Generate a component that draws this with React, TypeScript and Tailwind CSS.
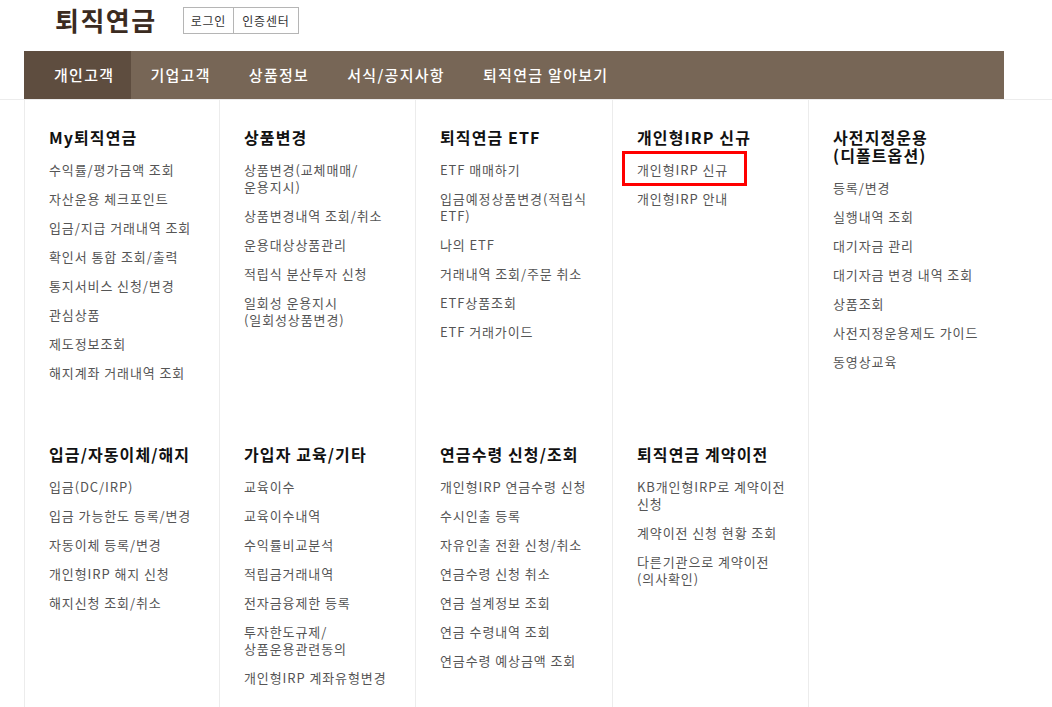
import React from "react";

type Col = { title: string[]; items: string[][]; highlight?: number };

const row1: Col[] = [
  {
    title: ["My퇴직연금"],
    items: [
      ["수익률/평가금액 조회"],
      ["자산운용 체크포인트"],
      ["입금/지급 거래내역 조회"],
      ["확인서 통합 조회/출력"],
      ["통지서비스 신청/변경"],
      ["관심상품"],
      ["제도정보조회"],
      ["해지계좌 거래내역 조회"],
    ],
  },
  {
    title: ["상품변경"],
    items: [
      ["상품변경(교체매매/", "운용지시)"],
      ["상품변경내역 조회/취소"],
      ["운용대상상품관리"],
      ["적립식 분산투자 신청"],
      ["일회성 운용지시", "(일회성상품변경)"],
    ],
  },
  {
    title: ["퇴직연금 ETF"],
    items: [
      ["ETF 매매하기"],
      ["입금예정상품변경(적립식", "ETF)"],
      ["나의 ETF"],
      ["거래내역 조회/주문 취소"],
      ["ETF상품조회"],
      ["ETF 거래가이드"],
    ],
  },
  {
    title: ["개인형IRP 신규"],
    items: [["개인형IRP 신규"], ["개인형IRP 안내"]],
    highlight: 0,
  },
  {
    title: ["사전지정운용", "(디폴트옵션)"],
    items: [
      ["등록/변경"],
      ["실행내역 조회"],
      ["대기자금 관리"],
      ["대기자금 변경 내역 조회"],
      ["상품조회"],
      ["사전지정운용제도 가이드"],
      ["동영상교육"],
    ],
  },
];

const row2: Col[] = [
  {
    title: ["입금/자동이체/해지"],
    items: [
      ["입금(DC/IRP)"],
      ["입금 가능한도 등록/변경"],
      ["자동이체 등록/변경"],
      ["개인형IRP 해지 신청"],
      ["해지신청 조회/취소"],
    ],
  },
  {
    title: ["가입자 교육/기타"],
    items: [
      ["교육이수"],
      ["교육이수내역"],
      ["수익률비교분석"],
      ["적립금거래내역"],
      ["전자금융제한 등록"],
      ["투자한도규제/", "상품운용관련동의"],
      ["개인형IRP 계좌유형변경"],
    ],
  },
  {
    title: ["연금수령 신청/조회"],
    items: [
      ["개인형IRP 연금수령 신청"],
      ["수시인출 등록"],
      ["자유인출 전환 신청/취소"],
      ["연금수령 신청 취소"],
      ["연금 설계정보 조회"],
      ["연금 수령내역 조회"],
      ["연금수령 예상금액 조회"],
    ],
  },
  {
    title: ["퇴직연금 계약이전"],
    items: [
      ["KB개인형IRP로 계약이전", "신청"],
      ["계약이전 신청 현황 조회"],
      ["다른기관으로 계약이전", "(의사확인)"],
    ],
  },
  { title: [], items: [] },
];

function Cell({ col }: { col: Col }) {
  return (
    <div className="border-l border-[#ececec] pl-[24px] pr-[4px] pt-[28px] pb-[36px]">
      {col.title.length > 0 && (
        <div className="text-[16px] leading-[18px] font-bold text-[#111] tracking-[1.1px] mb-[15px]">
          {col.title.map((t, i) => (
            <div key={i}>{t}</div>
          ))}
        </div>
      )}
      <div className="flex flex-col gap-[12px]">
        {col.items.map((it, i) => (
          <div
            key={i}
            className="relative text-[13px] leading-[17px] text-[#555] tracking-[0.9px] whitespace-nowrap"
          >
            {it.map((l, j) => (
              <div key={j}>{l}</div>
            ))}
            {col.highlight === i && (
              <span className="absolute left-[-15px] top-[-10px] w-[125px] h-[35px] border-[3px] border-[#ff0000]" />
            )}
          </div>
        ))}
      </div>
    </div>
  );
}

export default function App() {
  const tabs = ["기업고객", "상품정보", "서식/공지사항", "퇴직연금 알아보기"];
  return (
    <div
      className="w-[1052px] h-[707px] overflow-hidden bg-white"
      style={{ fontFamily: '"Noto Sans CJK KR", "Noto Sans", sans-serif' }}
    >
      <div className="h-[51px] flex items-start pl-[55px]">
        <div className="mt-[2px] text-[26px] leading-[36px] font-bold text-[#3b2b21] tracking-[1.5px]">
          퇴직연금
        </div>
        <div className="ml-[26px] mt-[7px] flex h-[27px] border border-[#b5b5b5] text-[12px] text-[#333] tracking-[0.8px]">
          <div className="px-[7px] flex items-center border-r border-[#b5b5b5]">로그인</div>
          <div className="px-[8px] flex items-center">인증센터</div>
        </div>
      </div>
      <div className="ml-[24px] w-[980px] h-[48px] bg-[#776656] flex text-white text-[15px] font-medium tracking-[1.3px]">
        <div className="bg-[#5e4d3f] pl-[30px] pr-[17px] flex items-center">개인고객</div>
        {tabs.map((t) => (
          <div key={t} className="px-[19px] flex items-center">
            {t}
          </div>
        ))}
      </div>
      <div className="border-t border-[#ececec]">
        <div className="ml-[24px] w-[981px] grid grid-cols-[195px_196px_197px_196px_197px]">
          {row1.map((c, i) => (
            <Cell key={"a" + i} col={c} />
          ))}
          {row2.map((c, i) => (
            <Cell key={"b" + i} col={c} />
          ))}
        </div>
      </div>
    </div>
  );
}
